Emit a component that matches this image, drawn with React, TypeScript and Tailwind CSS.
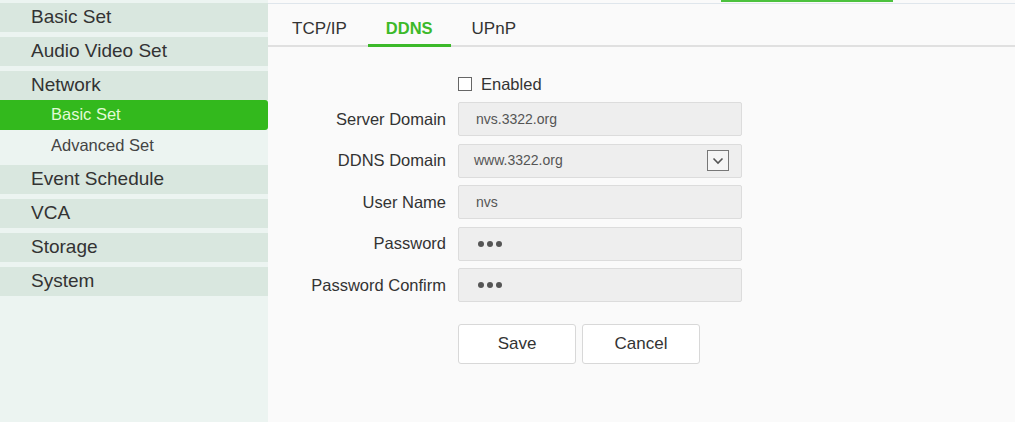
import React, { useState } from 'react';

const menu = [
  { label: 'Basic Set' },
  { label: 'Audio Video Set' },
  { label: 'Network', children: ['Basic Set', 'Advanced Set'] },
  { label: 'Event Schedule' },
  { label: 'VCA' },
  { label: 'Storage' },
  { label: 'System' },
];

const tabs = ['TCP/IP', 'DDNS', 'UPnP'];

function Field({ label, children }: { label: string; children: React.ReactNode }) {
  return (
    <div className="flex items-center h-[34px]">
      <div className="w-[178px] pr-[12px] text-right text-[16.5px] text-[#333]">{label}</div>
      <div className="w-[284px] h-[34px]">{children}</div>
    </div>
  );
}

function Dots() {
  return (
    <div className="flex gap-[3px]">
      <span className="w-[6px] h-[6px] rounded-full bg-[#555]" />
      <span className="w-[6px] h-[6px] rounded-full bg-[#555]" />
      <span className="w-[6px] h-[6px] rounded-full bg-[#555]" />
    </div>
  );
}

export default function App() {
  const [tab, setTab] = useState('DDNS');
  const [enabled, setEnabled] = useState(false);

  return (
    <div className="relative h-[422px] w-[1015px] flex bg-[#fafafa] overflow-hidden" style={{ fontFamily: '"Liberation Sans", Arial, sans-serif' }}>
      {/* top strip */}
      <div className="absolute left-[268px] right-0 top-[3px] h-px bg-[#dfe6ec]" />
      <div className="absolute left-[721px] w-[172px] top-0 h-[2px] bg-[#4cc23e]" />

      {/* sidebar */}
      <aside className="w-[268px] shrink-0 bg-[#ecf4f1] flex flex-col gap-[5px] pt-[3px]">
        {menu.map((m) => (
          <div key={m.label} className="flex flex-col">
            <div className="h-[29px] bg-[#d9e7df] pl-[31px] flex items-center text-[19px] text-[#333]">{m.label}</div>
            {m.children && (
              <div className="flex flex-col">
                {m.children.map((c, i) => (
                  <div
                    key={c}
                    className={
                      i === 0
                        ? 'h-[30px] pb-[1px] pl-[51px] flex items-center text-[16.5px] bg-[#33b91d] text-[#e2fbd6] rounded-r-[3px]'
                        : 'h-[30px] pl-[51px] flex items-center text-[16.5px] text-[#444]'
                    }
                  >
                    {c}
                  </div>
                ))}
              </div>
            )}
          </div>
        ))}
      </aside>

      {/* content */}
      <main className="flex-1 flex flex-col">
        <div className="mt-[8px] h-[39px] pt-[4px] border-b-2 border-[#e0e0e0] flex items-stretch gap-[3px] pl-[6px]">
          {tabs.map((t) => (
            <button
              key={t}
              onClick={() => setTab(t)}
              className={
                t === tab
                  ? 'relative px-[18px] text-[16.5px] font-bold text-[#3cb92a]'
                  : 'relative px-[18px] text-[17px] text-[#333]'
              }
            >
              {t}
              {t === tab && <span className="absolute left-0 right-0 -bottom-[2px] h-[3px] bg-[#3cb92a]" />}
            </button>
          ))}
        </div>

        <div className="flex flex-col pl-[12px] pt-[29px]">
          <label className="ml-[178px] flex items-center gap-[9px] h-[16px] text-[16.5px] text-[#333]">
            <input type="checkbox" checked={enabled} onChange={(e) => setEnabled(e.target.checked)} className="appearance-none w-[14px] h-[14px] border border-[#666] bg-white" />
            Enabled
          </label>

          <div className="flex flex-col gap-[7.5px] mt-[10px]">
            <Field label="Server Domain">
              <div className="w-full h-full bg-[#eeeeee] border border-[#dcdcdc] rounded-[2px] pl-[17px] flex items-center text-[14px] text-[#555]">nvs.3322.org</div>
            </Field>
            <Field label="DDNS Domain">
              <div className="w-full h-full bg-[#eeeeee] border border-[#dcdcdc] rounded-[2px] pl-[15px] pr-[12px] flex items-center justify-between text-[14px] text-[#555]">
                <span>www.3322.org</span>
                <span className="w-[22px] h-[21px] border border-[#777] bg-[#f5f5f5] flex items-center justify-center">
                  <svg width="12" height="8" viewBox="0 0 12 8"><path d="M1.5 1.5 L6 6 L10.5 1.5" fill="none" stroke="#555" strokeWidth="1.6" /></svg>
                </span>
              </div>
            </Field>
            <Field label="User Name">
              <div className="w-full h-full bg-[#eeeeee] border border-[#dcdcdc] rounded-[2px] pl-[17px] flex items-center text-[14px] text-[#555]">nvs</div>
            </Field>
            <Field label="Password">
              <div className="w-full h-full bg-[#eeeeee] border border-[#dcdcdc] rounded-[2px] pl-[19px] flex items-center">
                <Dots />
              </div>
            </Field>
            <Field label="Password Confirm">
              <div className="w-full h-full bg-[#eeeeee] border border-[#dcdcdc] rounded-[2px] pl-[19px] flex items-center">
                <Dots />
              </div>
            </Field>
          </div>

          <div className="ml-[178px] mt-[22px] flex gap-[6px]">
            <button className="w-[118px] h-[40px] bg-white border border-[#d8d8d8] rounded-[3px] text-[17px] text-[#333]">Save</button>
            <button className="w-[118px] h-[40px] bg-white border border-[#d8d8d8] rounded-[3px] text-[17px] text-[#333]">Cancel</button>
          </div>
        </div>
      </main>
    </div>
  );
}
